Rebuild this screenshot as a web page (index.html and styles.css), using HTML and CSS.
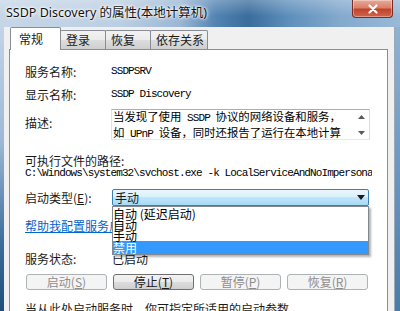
FILE: index.html
```html
<!DOCTYPE html>
<html lang="zh-CN">
<head>
  <meta charset="UTF-8">
  <meta name="viewport" content="width=device-width, initial-scale=1.0">
  <title>SSDP Discovery 的属性(本地计算机)</title>
  <link rel="stylesheet" href="styles.css">
</head>
<body>
  <div class="window">
    <div class="titlebar">
      <span class="title">SSDP Discovery 的属性(本地计算机)</span>
      <div class="close">
        <svg width="12" height="10" viewBox="0 0 12 10"><path d="M2.5 1.5 L9.5 8.5 M9.5 1.5 L2.5 8.5" stroke="#fff" stroke-width="2.2" stroke-linecap="round"/></svg>
      </div>
    </div>
    <div class="frame">
      <div class="edge-left"></div>
      <div class="dialog">
        <div class="tabs">
          <div class="tab active">常规</div>
          <div class="tab">登录</div>
          <div class="tab">恢复</div>
          <div class="tab wide">依存关系</div>
        </div>
        <div class="panel">
          <div class="row r-name"><span class="label">服务名称:</span><span class="mono">SSDPSRV</span></div>
          <div class="row r-display"><span class="label">显示名称:</span><span class="mono">SSDP Discovery</span></div>
          <div class="row r-desc">
            <span class="label">描述:</span>
            <div class="textarea">
              <div class="text">
                <div>当发现了使用<span class="mono"> SSDP </span>协议的网络设备和服务，</div>
                <div>如<span class="mono"> UPnP </span>设备，同时还报告了运行在本地计算</div>
              </div>
              <div class="scroll">
                <svg width="7" height="4" viewBox="0 0 7 4"><path d="M0 4 L3.5 0 L7 4 Z" fill="#5a5a5a"/></svg>
                <svg width="7" height="4" viewBox="0 0 7 4"><path d="M0 0 L7 0 L3.5 4 Z" fill="#5a5a5a"/></svg>
              </div>
            </div>
          </div>
          <div class="row r-exe">可执行文件的路径:</div>
          <div class="row r-path mono">C:\Windows\system32\svchost.exe -k LocalServiceAndNoImpersonation</div>
          <div class="row r-start">
            <span class="label">启动类型(<u>E</u>):</span>
            <div class="select">
              <span class="value">手动</span>
              <svg width="8" height="5" viewBox="0 0 8 5"><path d="M0 0 L8 0 L4 5 Z" fill="#1a1a1a"/></svg>
              <div class="options">
                <div class="option">自动 (延迟启动)</div>
                <div class="option">自动</div>
                <div class="option">手动</div>
                <div class="option selected">禁用</div>
              </div>
            </div>
          </div>
          <div class="row r-link"><span class="link">帮助我配置服务启动选项。</span></div>
          <div class="row r-status"><span class="label">服务状态:</span><span class="status">已启动</span></div>
          <div class="row r-buttons">
            <button class="btn" disabled>启动(<u>S</u>)</button>
            <button class="btn">停止(<u>T</u>)</button>
            <button class="btn" disabled>暂停(<u>P</u>)</button>
            <button class="btn" disabled>恢复(<u>R</u>)</button>
          </div>
          <div class="row r-note">当从此处启动服务时，你可指定所适用的启动参数。</div>
        </div>
      </div>
      <div class="edge-right"></div>
    </div>
  </div>
</body>
</html>
```

FILE: styles.css
```css
* {
  box-sizing: border-box;
}

body {
  margin: 0;
  width: 400px;
  height: 311px;
  overflow: hidden;
  font-family: "Noto Sans CJK SC", sans-serif;
  font-size: 12px;
  color: #1a1a1a;
  background: #5a86b2;
}

.window {
  width: 400px;
  height: 311px;
  display: flex;
  flex-direction: column;
}

.titlebar {
  height: 27px;
  display: flex;
  align-items: flex-start;
  background:
    linear-gradient(180deg, rgba(255, 255, 255, 0.25), rgba(255, 255, 255, 0) 60%),
    linear-gradient(90deg, #c6d6e7 0%, #bccfe2 30%, #9ab7d4 45%, #5283b2 54%, #3a6c9c 62%, #5d8ebb 72%, #83a9cd 85%, #9ab9d7 100%);
}

.title {
  padding-left: 6px;
  line-height: 25px;
  font-family: "Noto Sans", "Noto Sans CJK SC", sans-serif;
  font-size: 12.5px;
  color: #111;
  text-shadow: 0 0 5px #fff, 0 0 3px #fff, 0 0 2px #fff;
  white-space: nowrap;
}

.close {
  margin-left: auto;
  margin-right: 7px;
  width: 41px;
  height: 18px;
  display: flex;
  align-items: center;
  justify-content: center;
  border: 1px solid #7b2b22;
  border-top: none;
  border-radius: 0 0 4px 4px;
  background: linear-gradient(180deg, #e9a99a 0%, #d98068 45%, #c2432c 55%, #d0664a 100%);
  box-shadow: inset 0 0 0 1px rgba(255, 255, 255, 0.35);
}

.frame {
  flex: 1;
  display: flex;
  min-height: 0;
}

.edge-left {
  width: 4px;
  background: linear-gradient(180deg, #c2d4e7 0%, #9db9d6 40%, #3f6f9e 75%, #1f4c7c 100%);
}

.edge-right {
  width: 6px;
  background: linear-gradient(180deg, #8fb2d3 0%, #6b97c2 50%, #4a7aa9 100%);
  border-left: 1px solid #9aa9b8;
}

.dialog {
  width: 390px;
  background: #f0f0f0;
  display: flex;
  flex-direction: column;
  padding-left: 5px;
  overflow: hidden;
}

.tabs {
  height: 25px;
  display: flex;
  align-items: flex-end;
  padding-left: 1px;
}

.tab {
  width: 46px;
  height: 19px;
  margin-left: -1px;
  padding-left: 5px;
  line-height: 18px;
  border: 1px solid #898c95;
  border-bottom: none;
  border-radius: 2px 2px 0 0;
  background: linear-gradient(180deg, #f2f2f2 0%, #ebebeb 50%, #dddddd 50%, #cfcfcf 100%);
  white-space: nowrap;
}

.tab.wide {
  width: 58px;
}

.tab.active {
  width: 51px;
  height: 23px;
  margin-left: 0;
  margin-bottom: -1px;
  padding-left: 8px;
  line-height: 22px;
  background: #fff;
  position: relative;
  z-index: 1;
}

.panel {
  width: 379px;
  flex: 1;
  background: #fff;
  border: 1px solid #898c95;
  padding-left: 15px;
  display: flex;
  flex-direction: column;
}

.row {
  display: flex;
  align-items: center;
  height: 16px;
  flex: none;
  white-space: nowrap;
}

.label {
  width: 86px;
  flex: none;
}

.mono {
  font-family: "Liberation Mono", monospace;
  font-size: 11px;
  letter-spacing: -0.9px;
  color: #000;
}

.r-name {
  margin-top: 13px;
}

.r-display {
  margin-top: 7px;
}

.r-desc {
  margin-top: 7px;
  height: 31px;
  align-items: flex-start;
}

.r-desc .label {
  margin-top: 5px;
}

.textarea {
  width: 259px;
  height: 31px;
  display: flex;
  border: 1px solid #abadb3;
  border-color: #abadb3 #dbdfe6 #e3e9ef #e2e3ea;
}

.textarea .text {
  flex: 1;
  padding-left: 1px;
  margin-top: -1px;
  font-size: 11.4px;
  line-height: 14px;
  color: #000;
}

.scroll {
  width: 16px;
  display: flex;
  flex-direction: column;
  justify-content: space-between;
  align-items: center;
  padding: 5px 0 4px;
}

.r-exe {
  margin-top: 13px;
  height: 14px;
}

.r-path {
  height: 13px;
  width: 347px;
  display: block;
  line-height: 13px;
  overflow: hidden;
}

.r-start {
  margin-top: 9px;
  height: 17px;
}

.select {
  position: relative;
  margin-left: 1px;
  width: 257px;
  height: 17px;
  display: flex;
  align-items: center;
  justify-content: space-between;
  padding: 0 3px 0 2px;
  border: 1px solid #3c7fb1;
  border-radius: 2px;
  background: linear-gradient(180deg, #eaf6fd 0%, #d9f0fc 50%, #bee6fd 50%, #a7d9f5 100%);
  z-index: 2;
}

.select .value {
  line-height: 15px;
}

.options {
  position: absolute;
  left: -1px;
  top: calc(100% + 1px);
  width: 257px;
  padding-top: 1px;
  background: #fff;
  border: 1px solid #828790;
  box-shadow: 2px 2px 2px rgba(0, 0, 0, 0.3);
}

.option {
  height: 11px;
  line-height: 11px;
  color: #000;
}

.option.selected {
  height: 13px;
  line-height: 13px;
  background: #3399ff;
  color: #fff;
}

.r-link {
  margin-top: 12px;
  height: 14px;
}

.link {
  color: #0066cc;
  text-decoration: underline;
}

.r-status {
  margin-top: 19px;
  height: 14px;
}

.status {
  margin-left: 1px;
}

.r-buttons {
  margin-top: 9px;
  height: 16px;
  gap: 6px;
  padding-left: 1px;
}

.btn {
  width: 81px;
  height: 16px;
  padding: 0;
  font-family: "Noto Sans CJK SC", sans-serif;
  font-size: 12px;
  line-height: 14px;
  color: #1a1a1a;
  border: 1px solid #707070;
  border-radius: 3px;
  background: linear-gradient(180deg, #f2f2f2 0%, #ebebeb 50%, #dddddd 50%, #cfcfcf 100%);
}

.btn:disabled {
  color: #8d8d8d;
  border-color: #adb2b5;
  background: #f4f4f4;
}

.r-note {
  margin-top: 11px;
  height: 14px;
}
```
